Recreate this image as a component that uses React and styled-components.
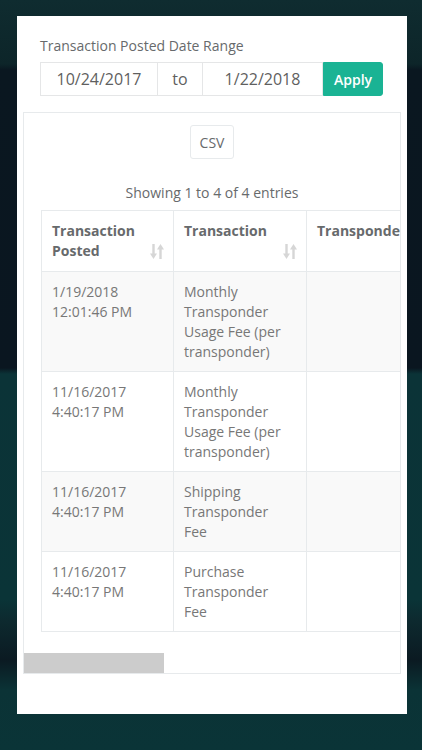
import styled, { createGlobalStyle } from 'styled-components';

const columns = [
  { title: 'Transaction Posted', width: 132 },
  { title: 'Transaction', width: 133 },
  { title: 'Transponder', width: 130 },
  { title: 'Plate', width: 130 },
  { title: 'Location', width: 150 },
  { title: 'Amount', width: 150 },
  { title: 'Balance', width: 151 },
];

const rows = [
  { posted: ['1/19/2018', '12:01:46 PM'], text: 'Monthly Transponder Usage Fee (per transponder)' },
  { posted: ['11/16/2017', '4:40:17 PM'], text: 'Monthly Transponder Usage Fee (per transponder)' },
  { posted: ['11/16/2017', '4:40:17 PM'], text: 'Shipping Transponder Fee' },
  { posted: ['11/16/2017', '4:40:17 PM'], text: 'Purchase Transponder Fee' },
];

function SortIcon() {
  return (
    <SortMark width="14" height="15" viewBox="0 0 14 15">
      <rect x="2.3" y="0" width="2.4" height="11" />
      <polygon points="0,9.5 7,9.5 3.5,15" />
      <polygon points="7,5.5 14,5.5 10.5,0" />
      <rect x="9.3" y="4" width="2.4" height="11" />
    </SortMark>
  );
}

function App() {
  return (
    <Page>
      <GlobalStyle />
      <Card>
        <FilterForm>
          <Label>Transaction Posted Date Range</Label>
          <InputGroup>
            <DateInput $width={118} defaultValue="10/24/2017" />
            <Addon>to</Addon>
            <DateInput $width={120} $joined defaultValue="1/22/2018" />
            <ApplyButton>Apply</ApplyButton>
          </InputGroup>
        </FilterForm>

        <TableBox>
          <Scroller>
            <Toolbar>
              <CsvButton>CSV</CsvButton>
            </Toolbar>
            <Info>Showing 1 to 4 of 4 entries</Info>
            <Table>
              <colgroup>
                {columns.map((c) => (
                  <col key={c.title} style={{ width: c.width }} />
                ))}
              </colgroup>
              <thead>
                <tr>
                  {columns.map((c) => (
                    <Th key={c.title}>
                      {c.title}
                      <SortIcon />
                    </Th>
                  ))}
                </tr>
              </thead>
              <tbody>
                {rows.map((r, i) => (
                  <Tr key={i} $striped={i % 2 === 0}>
                    <Td>
                      {r.posted[0]}
                      <br />
                      {r.posted[1]}
                    </Td>
                    <Td>{r.text}</Td>
                    <Td />
                    <Td />
                    <Td />
                    <Td />
                    <Td />
                  </Tr>
                ))}
              </tbody>
            </Table>
          </Scroller>
          <ScrollTrack>
            <ScrollThumb />
          </ScrollTrack>
        </TableBox>
      </Card>
    </Page>
  );
}

const GlobalStyle = createGlobalStyle`
  *, *::before, *::after {
    box-sizing: border-box;
  }
  body {
    margin: 0;
    font-family: "Open Sans", "Noto Sans", sans-serif;
    color: #676a6c;
  }
`;

const Page = styled.div`
  min-height: 750px;
  padding: 16px 15px 36px 17px;
  background: linear-gradient(
    to bottom,
    #0f2c30 0px,
    #0d2529 64px,
    #0a1720 70px,
    #0a1620 368px,
    #0b3337 374px,
    #0a3437 600px,
    #0d2a2f 620px,
    #0b1a22 660px,
    #0b3336 690px,
    #0a3437 750px
  );
`;

const Card = styled.div`
  background: #fff;
  padding: 20px 6px 40px 6px;
`;

const FilterForm = styled.div`
  padding: 0 17px;
  margin-bottom: 16px;
`;

const Label = styled.label`
  display: block;
  font-size: 14px;
  line-height: 20px;
  margin-bottom: 6px;
`;

const InputGroup = styled.div`
  display: flex;
  height: 34px;
`;

const DateInput = styled.input`
  width: ${(p) => p.$width}px;
  height: 34px;
  border: 1px solid #e5e6e7;
  border-left-width: ${(p) => (p.$joined ? 0 : 1)}px;
  padding: 0 8px;
  font-family: inherit;
  font-size: 16px;
  color: #5f5f5f;
  text-align: center;
  outline: none;
  background: #fff;
`;

const Addon = styled.span`
  width: 45px;
  display: flex;
  align-items: center;
  justify-content: center;
  border: 1px solid #e5e6e7;
  border-left: none;
  font-size: 16px;
  color: #5f5f5f;
`;

const ApplyButton = styled.button`
  width: 60px;
  height: 34px;
  border: 1px solid #1ab394;
  border-radius: 0 3px 3px 0;
  background: #1ab394;
  color: #fff;
  font-family: inherit;
  font-size: 14px;
  font-weight: 600;
  cursor: pointer;
`;

const TableBox = styled.div`
  border: 1px solid #e7eaec;
`;

const Scroller = styled.div`
  padding: 12px 17px 21px 17px;
  overflow: hidden;
`;

const ScrollTrack = styled.div`
  height: 20px;
`;

const ScrollThumb = styled.div`
  width: 140px;
  height: 100%;
  background: #cccccc;
`;

const Toolbar = styled.div`
  display: flex;
  justify-content: center;
  margin-bottom: 24px;
`;

const CsvButton = styled.button`
  height: 34px;
  padding: 0 9px;
  border: 1px solid #e7eaec;
  border-radius: 3px;
  background: #fff;
  color: #676a6c;
  font-family: inherit;
  font-size: 14px;
`;

const Info = styled.div`
  text-align: center;
  font-size: 14px;
  line-height: 20px;
  margin-bottom: 7px;
`;

const Table = styled.table`
  border-collapse: collapse;
  table-layout: fixed;
  width: 976px;
  font-size: 14px;
  line-height: 20px;
`;

const Th = styled.th`
  position: relative;
  padding: 10px 30px 10px 10px;
  border: 1px solid #e7eaec;
  text-align: left;
  vertical-align: top;
  font-weight: 700;
  color: #676a6c;
  background: #fff;
`;

const SortMark = styled.svg`
  position: absolute;
  right: 9px;
  bottom: 12px;
  fill: #d6d6d6;
`;

const Tr = styled.tr`
  background: ${(p) => (p.$striped ? '#f9f9f9' : '#fff')};
`;

const Td = styled.td`
  padding: 10px 12px 9px 10px;
  border: 1px solid #e7eaec;
  vertical-align: top;
  color: #777;
`;

export default App;
